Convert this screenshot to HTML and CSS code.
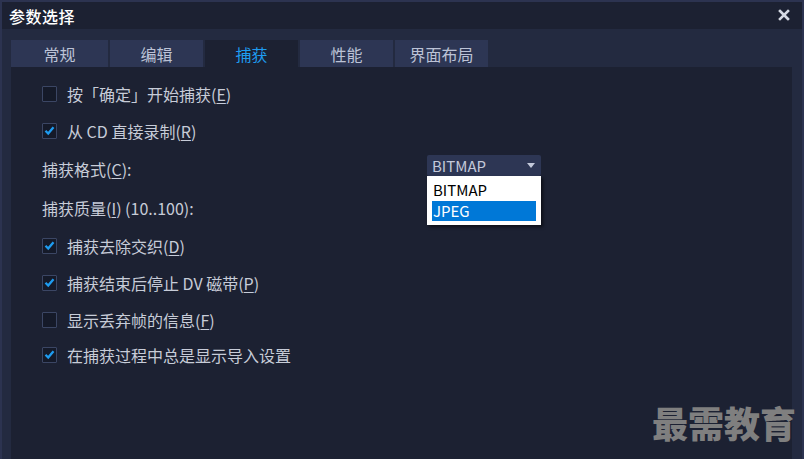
FILE: index.html
```html
<!DOCTYPE html>
<html>
<head>
  <meta charset="UTF-8">
  <title>参数选择</title>
  <link rel="stylesheet" href="styles.css">
</head>
<body>
  <div class="window">
    <div class="titlebar">
      <span class="title">参数选择</span>
      <svg class="close" width="12" height="12" viewBox="0 0 12 12">
        <path d="M2 2 L10 10 M10 2 L2 10" stroke="#d6dae4" stroke-width="2.6" stroke-linecap="square"/>
      </svg>
    </div>

    <div class="frame">
      <div class="tabs">
        <div class="tab tab-first">常规</div>
        <div class="tab">编辑</div>
        <div class="tab active">捕获</div>
        <div class="tab">性能</div>
        <div class="tab">界面布局</div>
      </div>

      <div class="panel">
        <div class="row">
          <span class="box"></span>
          <span class="label">按「确定」开始捕获(<u>E</u>)</span>
        </div>
        <div class="row">
          <span class="box checked"><svg width="13" height="13" viewBox="0 0 13 13"><path d="M2.5 6.8 L5.2 9.5 L10.5 3.2" fill="none" stroke="#1e9cf0" stroke-width="2.3"/></svg></span>
          <span class="label">从 CD 直接录制(<u>R</u>)</span>
        </div>
        <div class="row row-tall">
          <span class="field-label">捕获格式(<u>C</u>):</span>
          <div class="combo">
            <span>BITMAP</span>
            <span class="arrow"></span>
            <div class="list">
              <div class="item">BITMAP</div>
              <div class="item selected">JPEG</div>
            </div>
          </div>
        </div>
        <div class="row row-tall">
          <span class="field-label">捕获质量(<u>I</u>) (10..100):</span>
        </div>
        <div class="row">
          <span class="box checked"><svg width="13" height="13" viewBox="0 0 13 13"><path d="M2.5 6.8 L5.2 9.5 L10.5 3.2" fill="none" stroke="#1e9cf0" stroke-width="2.3"/></svg></span>
          <span class="label">捕获去除交织(<u>D</u>)</span>
        </div>
        <div class="row">
          <span class="box checked"><svg width="13" height="13" viewBox="0 0 13 13"><path d="M2.5 6.8 L5.2 9.5 L10.5 3.2" fill="none" stroke="#1e9cf0" stroke-width="2.3"/></svg></span>
          <span class="label">捕获结束后停止 DV 磁带(<u>P</u>)</span>
        </div>
        <div class="row">
          <span class="box"></span>
          <span class="label">显示丢弃帧的信息(<u>F</u>)</span>
        </div>
        <div class="row row-last">
          <span class="box checked"><svg width="13" height="13" viewBox="0 0 13 13"><path d="M2.5 6.8 L5.2 9.5 L10.5 3.2" fill="none" stroke="#1e9cf0" stroke-width="2.3"/></svg></span>
          <span class="label">在捕获过程中总是显示导入设置</span>
        </div>
      </div>
    </div>

    <div class="watermark">最需教育</div>
  </div>
</body>
</html>
```

FILE: styles.css
```css
body {
  margin: 0;
  font-family: "Noto Sans CJK SC", "Noto Sans", sans-serif;
  background: #1c2132;
}
.window {
  position: relative;
  width: 804px;
  height: 459px;
  box-sizing: border-box;
  border: 2px solid #2c3350;
  border-bottom: none;
  background: #232a40;
  display: flex;
  flex-direction: column;
  overflow: hidden;
}
.titlebar {
  height: 27px;
  background: #1c2132;
  display: flex;
  align-items: center;
  justify-content: space-between;
  padding: 0 12px 0 7px;
  flex-shrink: 0;
}
.title {
  color: #ffffff;
  font-size: 16px;
  font-weight: 500;
  letter-spacing: 0.5px;
}
.close {
  margin-top: -2px;
}
.frame {
  flex: 1;
  display: flex;
  flex-direction: column;
  padding: 11px 10px 0 9px;
}
.tabs {
  display: flex;
  gap: 2px;
  height: 27px;
}
.tab {
  width: 93px;
  background: #2d3654;
  color: #bcc3d6;
  font-size: 16px;
  display: flex;
  align-items: center;
  justify-content: center;
}
.tab-first {
  width: 97px;
}
.tab.active {
  background: #1c2132;
  color: #1e9cf0;
}
.panel {
  flex: 1;
  background: #1c2132;
  padding: 8px 0 0 31px;
}
.row {
  height: 37px;
  display: flex;
  align-items: center;
  color: #c7ccd8;
  font-size: 16px;
}
.row-tall {
  height: 39px;
}
.row-last {
  margin-top: -2px;
}
u {
  text-underline-offset: 2px;
}
.box {
  width: 13px;
  height: 14px;
  border: 1px solid #3b4664;
  background: #151a29;
  border-radius: 1px;
  margin-right: 10px;
  display: flex;
  align-items: center;
  justify-content: center;
  flex-shrink: 0;
}
.field-label {
  width: 385px;
}
.combo {
  position: relative;
  align-self: flex-start;
  margin-top: 6px;
  width: 114px;
  height: 21px;
  box-sizing: border-box;
  background: #2d3654;
  border-radius: 2px;
  color: #c3c9da;
  font-size: 15px;
  display: flex;
  align-items: center;
  justify-content: space-between;
  padding: 0 6px 0 5px;
}
.arrow {
  width: 0;
  height: 0;
  border-left: 4px solid transparent;
  border-right: 4px solid transparent;
  border-top: 5px solid #c3c9da;
}
.list {
  position: absolute;
  left: 0;
  top: 21px;
  width: 114px;
  box-sizing: border-box;
  background: #ffffff;
  padding: 4px 5px;
  display: flex;
  flex-direction: column;
  gap: 1px;
  box-shadow: 2px 2px 3px rgba(0, 0, 0, 0.55);
}
.item {
  height: 20px;
  line-height: 20px;
  color: #000000;
  font-size: 15px;
  padding-left: 1px;
  overflow: hidden;
}
.item.selected {
  background: #0078d7;
  color: #ffffff;
}
.watermark {
  position: absolute;
  left: 650px;
  top: 396px;
  font-size: 36px;
  font-weight: 900;
  color: #7f7f7f;
  line-height: 48px;
}
```
